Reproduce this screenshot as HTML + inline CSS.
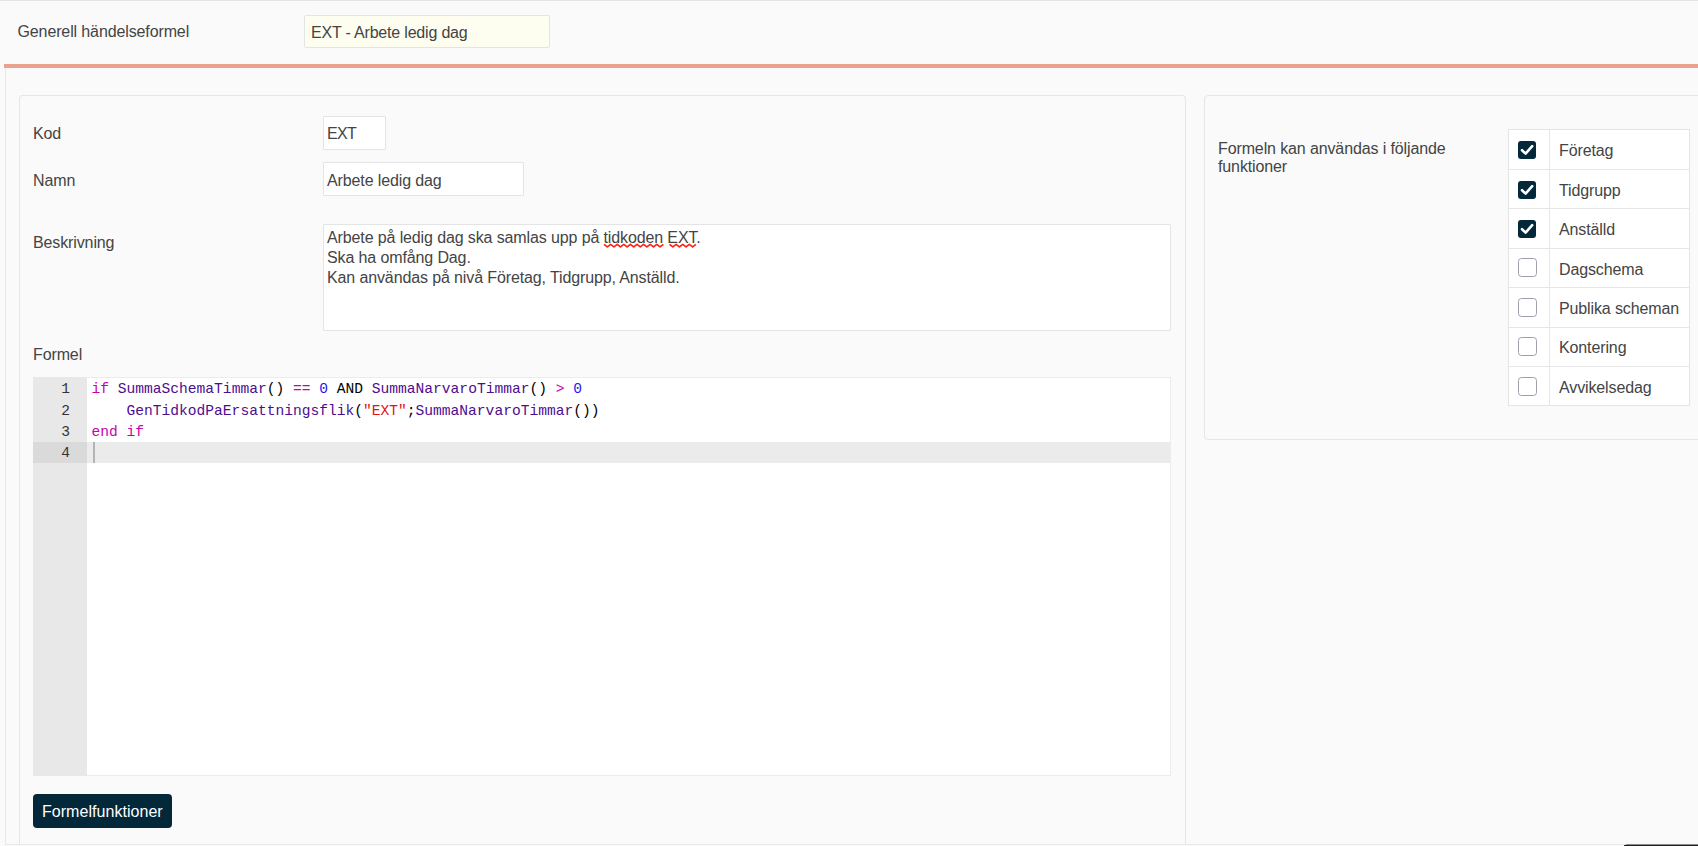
<!DOCTYPE html>
<html><head><meta charset="utf-8">
<style>
html,body{margin:0;padding:0;}
body{width:1698px;height:846px;overflow:hidden;background:#fafafa;position:relative;font-family:"Liberation Sans",sans-serif;font-size:16px;letter-spacing:-0.12px;color:#444;}
.a{position:absolute;white-space:nowrap;line-height:20px;}
.box{position:absolute;box-sizing:border-box;}
#topline{position:absolute;left:0;top:0;width:1698px;height:1px;background:#e4e4e4;}
#hinput{left:304px;top:15px;width:246px;height:33px;border:1px solid #e4e4e4;background:#fefef0;border-radius:2px;}
#orange{position:absolute;left:4px;top:64px;width:1700px;height:4px;background:#e9a290;}
#outer{left:5px;top:68px;width:1700px;height:777px;border-left:1px solid #e8e8e8;border-bottom:1px solid #e8e8e8;overflow:hidden;}
#lp{left:19px;top:95px;width:1167px;height:749px;border:1px solid #e6e6e6;border-bottom:none;border-radius:4px 4px 0 0;}
#rp{left:1204px;top:95px;width:600px;height:345px;border:1px solid #e6e6e6;border-radius:4px;}
.inp{position:absolute;box-sizing:border-box;background:#fff;border:1px solid #e4e4e4;border-radius:1px;}
#ed{left:33px;top:377px;width:1138px;height:399px;border:1px solid #ececec;background:#fff;}
#gut{position:absolute;left:33px;top:377px;width:54px;height:399px;background:#e8e8e8;}
#actl{position:absolute;left:87px;top:442px;width:1083px;height:20.5px;background:#ebebeb;}
#actg{position:absolute;left:33px;top:442px;width:54px;height:20.5px;background:#dadada;}
.code{position:absolute;font-family:"Liberation Mono",monospace;font-size:14.6px;line-height:21px;white-space:pre;color:#000;letter-spacing:0;}
.ln{position:absolute;font-family:"Liberation Mono",monospace;font-size:14.6px;line-height:21px;color:#333;letter-spacing:0;width:30px;text-align:right;}
.k{color:#c800a8}.f{color:#4d0d8f}.n{color:#2a14ee}.s{color:#e01414}
#cursor{position:absolute;left:93px;top:442px;width:2px;height:21px;background:#b4b4b4;}
#btn{left:33px;top:794px;width:139px;height:34px;background:#03283a;border-radius:4px;}
.tbl{position:absolute;box-sizing:border-box;background:#fff;border:1px solid #e4e4e4;}
.cb{position:absolute;box-sizing:border-box;width:18px;height:18px;border-radius:3px;}
.cb.on{background:#03283a;}
.cb.off{border:1.6px solid #9e9eae;background:#fff;width:19px;height:19px;margin:-1px 0 0 -0.3px;border-radius:3.5px;}
.sp{text-decoration:underline wavy #e02020;text-decoration-thickness:1px;text-underline-offset:2px;}
</style></head><body>
<div id="topline"></div>
<div class="a" style="left:17.5px;top:22px;">Generell händelseformel</div>
<div class="box" id="hinput"></div>
<div class="a" style="left:311px;top:23px;letter-spacing:-0.19px;">EXT - Arbete ledig dag</div>

<div class="box" id="outer"></div>
<div id="orange"></div>
<div class="box" id="lp"></div>
<div class="box" id="rp"></div>

<div class="a" style="left:33px;top:124px;">Kod</div>
<div class="inp" style="left:323px;top:116px;width:63px;height:34px;"></div>
<div class="a" style="left:327px;top:124px;letter-spacing:-0.7px;">EXT</div>

<div class="a" style="left:33px;top:171px;">Namn</div>
<div class="inp" style="left:323px;top:162px;width:201px;height:34px;"></div>
<div class="a" style="left:327px;top:171px;">Arbete ledig dag</div>

<div class="a" style="left:33px;top:232.5px;">Beskrivning</div>
<div class="inp" style="left:323px;top:224px;width:848px;height:107px;"></div>
<div class="a" style="left:327px;top:228px;line-height:19.8px;">Arbete på ledig dag ska samlas upp på tidkoden EXT.<br>Ska ha omfång Dag.<br>Kan användas på nivå Företag, Tidgrupp, Anställd.</div>

<svg style="position:absolute;left:590px;top:238px;" width="120" height="16"><path d="M14.00,6.30 L17.30,8.90 L20.60,6.30 L23.90,8.90 L27.20,6.30 L30.50,8.90 L33.80,6.30 L37.10,8.90 L40.40,6.30 L43.70,8.90 L47.00,6.30 L50.30,8.90 L53.60,6.30 L56.90,8.90 L60.20,6.30 L63.50,8.90 L66.80,6.30 L70.10,8.90 L73.40,6.30 M79.50,6.30 L82.80,8.90 L86.10,6.30 L89.40,8.90 L92.70,6.30 L96.00,8.90 L99.30,6.30 L102.60,8.90 L105.90,6.30" fill="none" stroke="#f21" stroke-width="1.7" stroke-linejoin="round"/></svg>
<div class="a" style="left:33px;top:345px;">Formel</div>
<div class="box" id="ed"></div>
<div id="gut"></div>
<div id="actg"></div>
<div id="actl"></div>
<div class="ln" style="left:40px;top:379px;">1</div>
<div class="ln" style="left:40px;top:401px;">2</div>
<div class="ln" style="left:40px;top:422px;">3</div>
<div class="ln" style="left:40px;top:443px;">4</div>
<div class="code" style="left:91.5px;top:379px;"><span class="k">if</span> <span class="f">SummaSchemaTimmar</span>() <span class="k">==</span> <span class="n">0</span> AND <span class="f">SummaNarvaroTimmar</span>() <span class="k">&gt;</span> <span class="n">0</span></div>
<div class="code" style="left:91.5px;top:401px;">    <span class="f">GenTidkodPaErsattningsflik</span>(<span class="s">"EXT"</span>;<span class="f">SummaNarvaroTimmar</span>())</div>
<div class="code" style="left:91.5px;top:422px;"><span class="k">end</span> <span class="k">if</span></div>
<div id="cursor"></div>

<div class="box" id="btn"></div>
<div class="a" style="left:42px;top:802px;color:#fff;font-size:16px;letter-spacing:0.04px;">Formelfunktioner</div>

<div class="a" style="left:1218px;top:139.5px;line-height:18.6px;white-space:normal;width:260px;">Formeln kan användas i följande<br>funktioner</div>
<div class="tbl" style="left:1508px;top:129px;width:182px;height:277px;"></div>
<div style="position:absolute;left:1549px;top:130px;width:1px;height:275px;background:#e6e6e6;"></div>
<div class="cb on" style="left:1518.2px;top:141.1px;"><svg width="18" height="18" viewBox="0 0 18 18" style="position:absolute;left:0;top:0"><path d="M4 9.2 L7.6 12.6 L14.2 5.2" fill="none" stroke="#fff" stroke-width="2.6" stroke-linecap="round" stroke-linejoin="round"/></svg></div>
<div class="a" style="left:1559px;top:141.4px;">Företag</div>
<div style="position:absolute;left:1509px;top:169px;width:180px;height:1px;background:#e6e6e6;"></div>
<div class="cb on" style="left:1518.2px;top:180.5px;"><svg width="18" height="18" viewBox="0 0 18 18" style="position:absolute;left:0;top:0"><path d="M4 9.2 L7.6 12.6 L14.2 5.2" fill="none" stroke="#fff" stroke-width="2.6" stroke-linecap="round" stroke-linejoin="round"/></svg></div>
<div class="a" style="left:1559px;top:180.8px;">Tidgrupp</div>
<div style="position:absolute;left:1509px;top:208px;width:180px;height:1px;background:#e6e6e6;"></div>
<div class="cb on" style="left:1518.2px;top:219.9px;"><svg width="18" height="18" viewBox="0 0 18 18" style="position:absolute;left:0;top:0"><path d="M4 9.2 L7.6 12.6 L14.2 5.2" fill="none" stroke="#fff" stroke-width="2.6" stroke-linecap="round" stroke-linejoin="round"/></svg></div>
<div class="a" style="left:1559px;top:220.2px;">Anställd</div>
<div style="position:absolute;left:1509px;top:248px;width:180px;height:1px;background:#e6e6e6;"></div>
<div class="cb off" style="left:1518.2px;top:259.3px;"></div>
<div class="a" style="left:1559px;top:259.6px;">Dagschema</div>
<div style="position:absolute;left:1509px;top:287px;width:180px;height:1px;background:#e6e6e6;"></div>
<div class="cb off" style="left:1518.2px;top:298.7px;"></div>
<div class="a" style="left:1559px;top:299.0px;">Publika scheman</div>
<div style="position:absolute;left:1509px;top:327px;width:180px;height:1px;background:#e6e6e6;"></div>
<div class="cb off" style="left:1518.2px;top:338.1px;"></div>
<div class="a" style="left:1559px;top:338.4px;">Kontering</div>
<div style="position:absolute;left:1509px;top:366px;width:180px;height:1px;background:#e6e6e6;"></div>
<div class="cb off" style="left:1518.2px;top:377.5px;"></div>
<div class="a" style="left:1559px;top:377.8px;">Avvikelsedag</div>
<div style="position:absolute;left:1626px;top:844px;width:80px;height:1px;background:#888;"></div>
<div style="position:absolute;left:1624px;top:845px;width:80px;height:1px;background:#222;"></div>
</body></html>
